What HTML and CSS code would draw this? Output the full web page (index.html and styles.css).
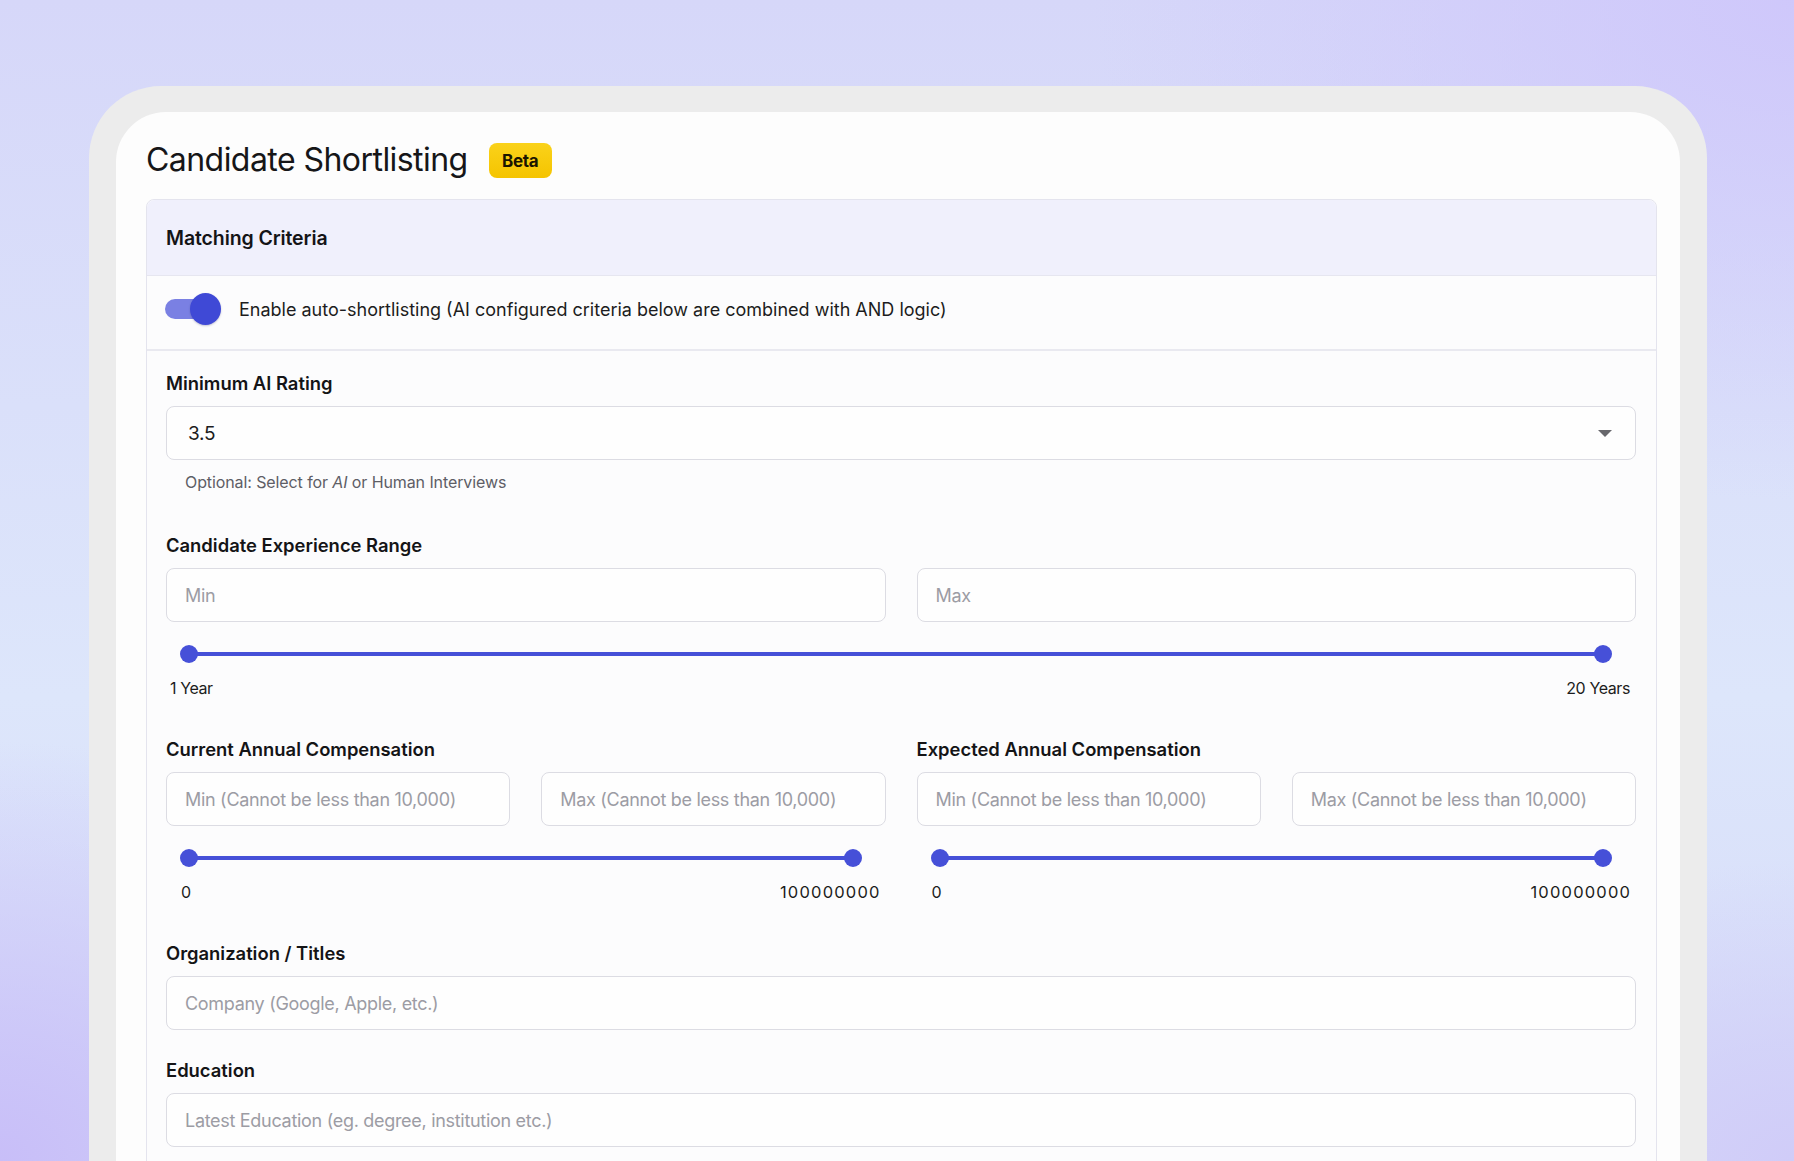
FILE: index.html
```html
<!DOCTYPE html>
<html lang="en">
<head>
<meta charset="utf-8">
<title>Candidate Shortlisting</title>
<link rel="stylesheet" href="styles.css">
</head>
<body>
<div class="frame">
  <div class="card">
    <div class="title-row">
      <h1 class="title">Candidate Shortlisting</h1>
      <span class="badge">Beta</span>
    </div>
    <div class="panel">
      <div class="panel-head">Matching Criteria</div>
      <div class="toggle-row">
        <span class="toggle"><span class="knob"></span></span>
        <span class="toggle-text">Enable auto-shortlisting (AI configured criteria below are combined with AND logic)</span>
      </div>
      <div class="panel-body">
        <div class="field field-rating">
          <div class="label">Minimum AI Rating</div>
          <div class="select">
            <span class="select-value">3.5</span>
            <svg class="caret" width="14" height="7" viewBox="0 0 14 7"><path d="M0 0H14L7 7Z" fill="#67676c"/></svg>
          </div>
          <div class="helper">Optional: Select for <em>AI</em> or Human Interviews</div>
        </div>

        <div class="field field-range">
          <div class="label">Candidate Experience Range</div>
          <div class="pair">
            <input class="input" type="text" placeholder="Min">
            <input class="input" type="text" placeholder="Max">
          </div>
          <div class="slider"><div class="track"><span class="thumb thumb-l"></span><span class="thumb thumb-r"></span></div></div>
          <div class="range-labels range-labels-exp"><span>1 Year</span><span>20 Years</span></div>
        </div>

        <div class="field field-range comp-grid">
          <div class="comp-col">
            <div class="label">Current Annual Compensation</div>
            <div class="pair">
              <input class="input" type="text" placeholder="Min (Cannot be less than 10,000)">
              <input class="input" type="text" placeholder="Max (Cannot be less than 10,000)">
            </div>
            <div class="slider"><div class="track"><span class="thumb thumb-l"></span><span class="thumb thumb-r"></span></div></div>
            <div class="range-labels range-labels-comp"><span>0</span><span class="num">100000000</span></div>
          </div>
          <div class="comp-col">
            <div class="label">Expected Annual Compensation</div>
            <div class="pair">
              <input class="input" type="text" placeholder="Min (Cannot be less than 10,000)">
              <input class="input" type="text" placeholder="Max (Cannot be less than 10,000)">
            </div>
            <div class="slider"><div class="track"><span class="thumb thumb-l"></span><span class="thumb thumb-r"></span></div></div>
            <div class="range-labels range-labels-comp"><span>0</span><span class="num">100000000</span></div>
          </div>
        </div>

        <div class="field field-org">
          <div class="label">Organization / Titles</div>
          <input class="input input-wide" type="text" placeholder="Company (Google, Apple, etc.)">
        </div>

        <div class="field">
          <div class="label">Education</div>
          <input class="input input-wide" type="text" placeholder="Latest Education (eg. degree, institution etc.)">
        </div>
      </div>
    </div>
  </div>
</div>
</body>
</html>
```

FILE: styles.css
```css
* { box-sizing: border-box; }

html, body {
  margin: 0;
  height: 1161px;
  overflow: hidden;
}

body {
  font-family: "Inter", "Liberation Sans", sans-serif;
  color: #1b1b1f;
  padding: 86px 87px 0 89px;
  background:
    radial-gradient(ellipse 700px 500px at 100% 0%, rgba(206, 198, 251, 0.9) 0%, rgba(206, 198, 251, 0) 100%),
    radial-gradient(ellipse 500px 420px at 0% 100%, rgba(200, 190, 248, 1) 0%, rgba(200, 190, 248, 0) 100%),
    radial-gradient(ellipse 420px 300px at 100% 100%, rgba(208, 204, 248, 1) 0%, rgba(208, 204, 248, 0) 100%),
    linear-gradient(180deg, #d6d7f9 0%, #dae0fa 35%, #dde6fb 60%, #d6dbf9 100%);
}

.frame {
  background: #ececec;
  border-radius: 72px 72px 0 0;
  padding: 26px 27px 0 27px;
  height: 1200px;
}

.card {
  background: #fdfdfd;
  border-radius: 50px 50px 0 0;
  padding: 26px 23px 0 30px;
  height: 1200px;
}

.title-row {
  display: flex;
  align-items: center;
  gap: 21px;
  height: 42px;
  margin-bottom: 19px;
}

.title {
  margin: 0;
  font-size: 32px;
  font-weight: 400;
  letter-spacing: -0.55px;
  color: #161618;
}

.badge {
  display: inline-flex;
  align-items: center;
  justify-content: center;
  width: 63px;
  height: 35px;
  margin-top: 3px;
  border-radius: 8px;
  background: linear-gradient(180deg, #fad21a 0%, #f5c400 100%);
  font-size: 17px;
  font-weight: 700;
  letter-spacing: -0.3px;
  color: #1a1500;
}

.panel {
  border: 1px solid #e4e4ee;
  border-radius: 8px;
  background: #fcfcfd;
}

.panel-head {
  height: 76px;
  display: flex;
  align-items: center;
  padding: 0 19px;
  background: #f0f0fc;
  border-bottom: 1px solid #e6e6f0;
  border-radius: 8px 8px 0 0;
  font-size: 19.5px;
  font-weight: 600;
  letter-spacing: -0.1px;
  color: #141416;
}

.toggle-row {
  display: flex;
  align-items: center;
  gap: 18px;
  padding: 17px 19px 24px 18px;
  border-bottom: 2px solid #e9e9f0;
}

.toggle {
  position: relative;
  display: block;
  width: 56px;
  height: 32px;
  flex: none;
}

.toggle::before {
  content: "";
  position: absolute;
  left: 0;
  top: 6px;
  width: 52px;
  height: 20px;
  border-radius: 10px;
  background: #7a80e3;
}

.knob {
  position: absolute;
  right: 0;
  top: 0;
  width: 31px;
  height: 32px;
  border-radius: 50%;
  background: #3f49d6;
  box-shadow: 0 1px 2px rgba(30, 30, 90, 0.25);
}

.toggle-text {
  font-size: 18px;
  letter-spacing: 0;
  color: #1c1c20;
}

.panel-body {
  padding: 21px 20px 200px 19px;
}

.label {
  font-size: 18.4px;
  line-height: 22px;
  font-weight: 600;
  letter-spacing: 0;
  color: #141416;
  margin-bottom: 12px;
}

.field-rating { margin-bottom: 42px; }
.field-range { margin-bottom: 40px; }
.field-org { margin-bottom: 29px; }

.select {
  height: 54px;
  border: 1px solid #dcdce3;
  border-radius: 8px;
  background: #fefefe;
  display: flex;
  align-items: center;
  justify-content: space-between;
  padding: 0 23px 0 21px;
}

.select-value {
  font-size: 19px;
  letter-spacing: -0.3px;
  color: #1c1c20;
}

.helper {
  margin-top: 12px;
  padding-left: 19px;
  font-size: 16px;
  line-height: 20px;
  letter-spacing: -0.1px;
  color: #5e5e66;
}

.helper em { font-style: italic; }

.pair {
  display: grid;
  grid-template-columns: 1fr 1fr;
  gap: 31px;
}

.input {
  display: block;
  width: 100%;
  height: 54px;
  border: 1px solid #dcdce3;
  border-radius: 8px;
  background: #fefefe;
  padding: 0 18px;
  font-family: inherit;
  font-size: 18px;
  letter-spacing: -0.3px;
  color: #1c1c20;
  outline: none;
}

.input::placeholder {
  color: #9c9ca4;
  opacity: 1;
}

.slider {
  margin-top: 23px;
  padding: 0 33px 0 23px;
  height: 18px;
  display: flex;
  align-items: center;
}

.track {
  position: relative;
  flex: 1;
  height: 4px;
  border-radius: 2px;
  background: #4650d8;
}

.thumb {
  position: absolute;
  top: -7px;
  width: 18px;
  height: 18px;
  border-radius: 50%;
  background: #4650d8;
}

.thumb-l { left: -9px; }
.thumb-r { right: -9px; }

.range-labels {
  margin-top: 15px;
  display: flex;
  justify-content: space-between;
  font-size: 16px;
  line-height: 20px;
  letter-spacing: -0.4px;
  color: #1c1c20;
}

.range-labels .num {
  font-size: 16.5px;
  letter-spacing: 1.2px;
  margin-right: -1.2px;
}

.range-labels-exp { padding: 0 6px 0 4px; }
.range-labels-comp { padding: 0 6px 0 15px; }

.comp-grid {
  display: grid;
  grid-template-columns: 1fr 1fr;
  gap: 31px;
}
```
